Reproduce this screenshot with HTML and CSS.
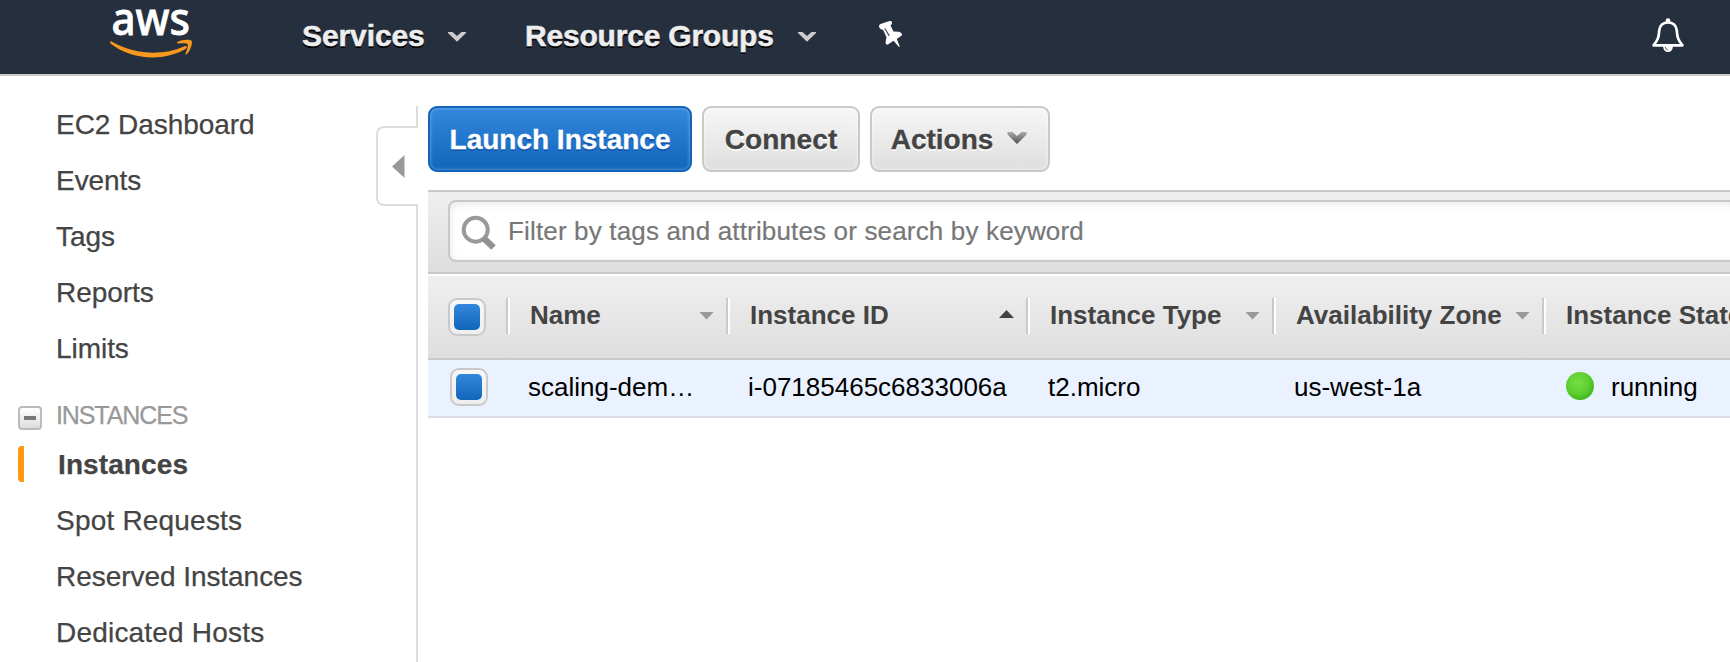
FILE: index.html
```html
<!DOCTYPE html>
<html lang="en">
<head>
<meta charset="utf-8">
<title>EC2 Instances</title>
<link rel="stylesheet" href="styles.css">
</head>
<body>
<header class="topbar">
  <svg class="logo" width="90" height="74" viewBox="0 0 90 74">
    <text x="1.500" y="34.500" textLength="78.500" lengthAdjust="spacingAndGlyphs" class="logo-text">aws</text>
    <path d="M1.500 41.500C26 55 52 56 74 46.500C77 45.300 78 47 75.500 49C54 61.500 22 60.500 .500 43.500C-.500 42 .300 41 1.500 41.500Z" fill="#f7981f"/>
    <path d="M67.500 42C72 39 81 39.300 81.800 41C82.600 43.500 80.500 51 76.500 54.300C75.500 55 75 54.500 75.500 53.500C77 50 78.500 45.500 77.500 44C76.500 42.700 71.500 43.200 68.300 43.500C67 43.600 66.500 42.700 67.500 42Z" fill="#f7981f"/>
  </svg>
  <a class="nav-item nav-services">Services</a>
  <svg class="nav-caret" width="18" height="10" viewBox="0 0 18 10"><path d="M0 0H4.500L9 4L13.500 0H18V1L9 9.800L0 1Z" fill="#ccc"/></svg>
  <a class="nav-item nav-groups">Resource Groups</a>
  <svg class="nav-caret" width="18" height="10" viewBox="0 0 18 10"><path d="M0 0H4.500L9 4L13.500 0H18V1L9 9.800L0 1Z" fill="#ccc"/></svg>
  <svg class="pin" width="26" height="30" viewBox="0 0 26 30"><path d="M0 6.500Q-.200 5 1.500 4L10.500 1Q12.700 .700 13 2.300Q13.300 4 11.500 5.500L14.500 11.500L20 11.800Q23.500 13 23 15.300L17.800 19L20.800 26.500L20 27L14.500 20.800L8.500 24.700Q6.800 24.700 6.500 22.700L7.500 17.300L4.200 10Q.500 9 0 6.500Z" fill="#fff"/><path d="M5.800 8.500L10.300 15.800" stroke="#4a5361" stroke-width="1.300"/></svg>
  <svg class="bell" width="34" height="36" viewBox="0 0 34 36">
    <path d="M2.500 27.300C8 21 7.700 17.500 8.200 12.500C8.700 7.500 12 4.300 17 4.300S25.300 7.500 25.800 12.500C26.300 17.500 26 21 31.500 27.300Z" fill="none" stroke="#fff" stroke-width="2.700" stroke-linejoin="round"/>
    <circle cx="17" cy="2.500" r="2.300" fill="#fff"/>
    <path d="M12 28H22Q21.500 34 17 34T12 28Z" fill="#fff"/>
    <path d="M14.300 29Q14.500 31.700 17 32" fill="none" stroke="#596371" stroke-width="1"/>
  </svg>
</header>
<div class="page">
  <nav class="sidebar">
    <a class="side-link">EC2 Dashboard</a>
    <a class="side-link">Events</a>
    <a class="side-link">Tags</a>
    <a class="side-link">Reports</a>
    <a class="side-link">Limits</a>
    <div class="group"><span class="collapse"></span><span class="group-title">INSTANCES</span></div>
    <a class="side-link selected">Instances</a>
    <a class="side-link loose">Spot Requests</a>
    <a class="side-link">Reserved Instances</a>
    <a class="side-link loose">Dedicated Hosts</a>
    <div class="handle"><svg width="13" height="23" viewBox="0 0 13 23"><path d="M0 11.500L12.500 0V23Z" fill="#999"/></svg></div>
  </nav>
  <main class="content">
    <div class="actions">
      <button class="btn primary">Launch Instance</button>
      <button class="btn connect">Connect</button>
      <button class="btn menu">Actions <svg width="20" height="14" viewBox="0 0 20 14"><defs><linearGradient id="caret-fill" x2="0" y2="1"><stop offset="0" stop-color="#aaa"/><stop offset="1" stop-color="#505050"/></linearGradient></defs><path d="M.500 1H5.500L10 5L14.500 1H19.500V3.500L10 13L.500 3.500Z" fill="url(#caret-fill)"/></svg></button>
    </div>
    <div class="filter">
      <div class="search">
        <svg width="36" height="36" viewBox="0 0 36 36"><circle cx="14.700" cy="14.700" r="12" fill="none" stroke="#999" stroke-width="4"/><path d="M22.500 23L32.500 32.500" stroke="#929292" stroke-width="6.500"/></svg>
        <span>Filter by tags and attributes or search by keyword</span>
      </div>
    </div>
    <div class="grid-row head">
      <div class="cell check"><span class="box"></span></div>
      <div class="cell"><span>Name</span><i class="sort"></i></div>
      <div class="cell"><span>Instance ID</span><i class="sort up"></i></div>
      <div class="cell"><span>Instance Type</span><i class="sort"></i></div>
      <div class="cell"><span>Availability Zone</span><i class="sort"></i></div>
      <div class="cell"><span>Instance State</span></div>
    </div>
    <div class="grid-row data">
      <div class="cell check"><span class="box"></span></div>
      <div class="cell">scaling-dem…</div>
      <div class="cell">i-07185465c6833006a</div>
      <div class="cell">t2.micro</div>
      <div class="cell">us-west-1a</div>
      <div class="cell state"><span class="dot"></span>running</div>
    </div>
  </main>
</div>
</body>
</html>
```
FILE: styles.css
```css
* { box-sizing: border-box; }
body {
  margin: 0;
  height: 662px;
  overflow: hidden;
  background: #fff;
  color: #444;
  font-family: "Liberation Sans", Arial, sans-serif;
  white-space: nowrap;
}
svg { display: block; flex: none; }

.topbar {
  display: flex;
  align-items: flex-start;
  height: 76px;
  padding-left: 110px;
  background: #252f3e;
  border-bottom: 2px solid #ccc;
}
.logo { overflow: visible; }
.logo-text { font: 500 45px "Noto Sans", sans-serif; fill: #fff; stroke: #fff; stroke-width: .8px; }
.nav-item {
  margin-top: 19px;
  font-size: 30px;
  font-weight: bold;
  line-height: 34px;
  color: #eee;
  -webkit-text-stroke: .5px #eee;
  text-shadow: 0 2px 0 #000;
}
.nav-services { width: 147px; margin-left: 102px; margin-right: -1px; letter-spacing: -.1px; }
.nav-groups { width: 273px; margin-left: 59px; letter-spacing: -.2px; }
.nav-caret { margin-top: 32px; }
.pin { margin: 20px 0 0 63px; }
.bell { margin: 18px 45px 0 auto; }

.page { display: flex; height: 586px; }
.sidebar {
  position: relative;
  flex: none;
  width: 418px;
  margin-top: 30px;
  border-right: 2px solid #ddd;
  padding-left: 18px;
}
.side-link {
  display: block;
  height: 36px;
  margin-bottom: 20px;
  padding-left: 38px;
  font-size: 28px;
  line-height: 38px;
  letter-spacing: -.05px;
  -webkit-text-stroke: .25px #444;
}
.loose { letter-spacing: .2px; }
.group { display: flex; height: 36px; margin-top: 30px; margin-bottom: 14px; }
.collapse {
  display: flex;
  align-items: center;
  justify-content: center;
  width: 24px;
  height: 24px;
  margin-top: 10px;
  border: 2px solid #bbb;
  border-radius: 4px;
  background: linear-gradient(#fff, #ddd);
}
.collapse::before { content: ""; width: 12px; height: 4px; background: #777; }
.group-title { margin-left: 14px; font-size: 25px; line-height: 38px; letter-spacing: -1.1px; color: #999; -webkit-text-stroke: .25px #999; }
.selected {
  padding-left: 34px;
  border-left: 6px solid #ff9914;
  border-radius: 4px 0 0 4px;
  font-weight: bold;
  letter-spacing: .1px;
}
.handle {
  position: absolute;
  top: 20px;
  right: -2px;
  display: flex;
  align-items: center;
  width: 42px;
  height: 80px;
  padding-left: 14px;
  background: #fff;
  border: 2px solid #ddd;
  border-right: 0;
  border-radius: 8px 0 0 8px;
}

.content { flex: 1; min-width: 0; margin-left: 10px; overflow: hidden; }
.actions { display: flex; gap: 10px; height: 114px; padding-top: 30px; }
.btn {
  display: flex;
  align-items: center;
  justify-content: center;
  height: 66px;
  padding: 1px 0 0;
  border: 2px solid #c9c9c9;
  border-radius: 9px;
  background: linear-gradient(#f7f7f7, #dedede);
  box-shadow: inset 0 0 4px 1px rgba(255, 255, 255, .4);
  color: #444;
  font: bold 28px "Liberation Sans", Arial, sans-serif;
  -webkit-text-stroke: .3px;
  text-shadow: 0 2px 0 #fff;
}
.primary {
  width: 264px;
  border-color: #1166bb;
  background: linear-gradient(#3388dd, #1166bb);
  box-shadow: inset 0 0 3px 1px rgba(255, 255, 255, .25);
  color: #fff;
  text-shadow: 0 2px 0 #1555aa;
}
.connect { width: 158px; letter-spacing: .1px; }
.menu { width: 180px; gap: 14px; padding-right: 2px; }
.menu svg { margin-top: -4px; }

.filter {
  height: 84px;
  padding: 8px 0 0 20px;
  border-top: 2px solid #c9c9c9;
  border-bottom: 2px solid #c9c9c9;
  background: linear-gradient(#efefef, #dedede);
}
.search {
  display: flex;
  height: 62px;
  margin-right: -12px;
  padding-left: 11px;
  border: 2px solid #c9c9c9;
  border-radius: 8px;
  background: #fff;
  box-shadow: inset 0 2px 8px rgba(0, 0, 0, .1);
  font-size: 26px;
  line-height: 58px;
  letter-spacing: .16px;
  color: #777;
  -webkit-text-stroke: .2px;
}
.search svg { margin-top: 13px; }
.search span { margin-left: 11px; }

.grid-row {
  display: grid;
  grid-template-columns: 78px 220px 300px 246px 270px 300px;
}
.head {
  height: 86px;
  padding-top: 22px;
  border-top: 2px solid #fff;
  border-bottom: 2px solid #c9c9c9;
  background: linear-gradient(#efefef, #dedede);
  font-size: 26px;
  font-weight: bold;
}
.head .cell {
  display: flex;
  align-items: center;
  justify-content: space-between;
  height: 36px;
  padding: 0 12px 1px 22px;
  border-left: 2px solid #c9c9c9;
  box-shadow: inset 2px 0 #fff;
}
.head .check { height: 38px; padding: 0 0 0 20px; border: 0; box-shadow: none; }
.sort {
  width: 15px;
  height: 8px;
  background: #999;
  clip-path: polygon(0 0, 100% 0, 50% 100%);
}
.sort.up { background: #444; clip-path: polygon(0 100%, 100% 100%, 50% 0); margin-top: -3px; }
.box {
  display: flex;
  width: 38px;
  height: 38px;
  padding: 4px;
  border: 2px solid #c9c9c9;
  border-radius: 9px;
  background: linear-gradient(#f7f7f7, #eee);
}
.box::before { content: ""; flex: 1; border-radius: 5px; background: linear-gradient(#3388dd, #1166bb); }
.data {
  height: 58px;
  border-bottom: 2px solid #d9dce4;
  background: #eaf2ff;
  color: #000;
  font-size: 26px;
  line-height: 54px;
}
.data .cell { padding-left: 22px; }
.data .check { padding: 8px 0 0 22px; }
.data .state { display: flex; padding-left: 24px; }
.dot {
  width: 28px;
  height: 28px;
  margin: 12px 17px 0 0;
  border-radius: 50%;
  background: radial-gradient(circle at 42% 38%, #75df45 0, #5fd032 45%, #39ad15 85%, #26940d 100%);
}
```
